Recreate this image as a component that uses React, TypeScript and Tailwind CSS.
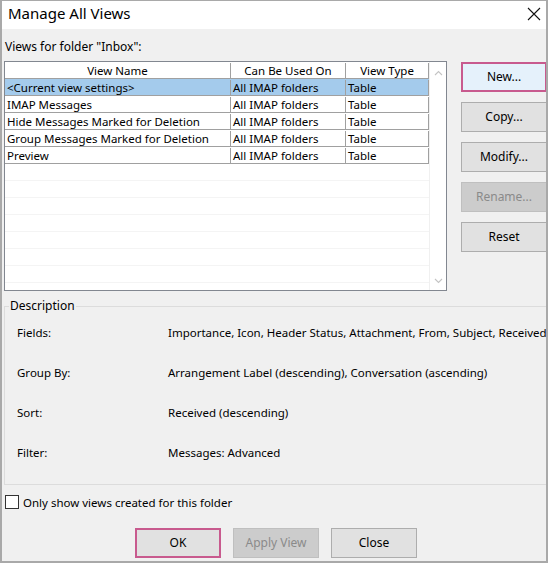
import React from "react";

const rows = [
  { name: "<Current view settings>", used: "All IMAP folders", type: "Table", sel: true },
  { name: "IMAP Messages", used: "All IMAP folders", type: "Table" },
  { name: "Hide Messages Marked for Deletion", used: "All IMAP folders", type: "Table" },
  { name: "Group Messages Marked for Deletion", used: "All IMAP folders", type: "Table" },
  { name: "Preview", used: "All IMAP folders", type: "Table" },
];

const desc = [
  { k: "Fields:", v: "Importance, Icon, Header Status, Attachment, From, Subject, Received, Size, Categories, Flag Status" },
  { k: "Group By:", v: "Arrangement Label (descending), Conversation (ascending)" },
  { k: "Sort:", v: "Received (descending)" },
  { k: "Filter:", v: "Messages: Advanced" },
];

function Btn({ label, variant = "normal" }: { label: string; variant?: "normal" | "focus" | "focusblue" | "disabled" }) {
  const cls =
    variant === "focusblue"
      ? "border-2 border-[#c85a8e] bg-[#e5f1fb] text-black"
      : variant === "focus"
      ? "border-2 border-[#c85a8e] bg-[#e1e1e1] text-black"
      : variant === "disabled"
      ? "border border-[#bfbfbf] bg-[#cccccc] text-[#8a8a8a]"
      : "border border-[#adadad] bg-[#e1e1e1] text-black";
  return (
    <div className={`w-[86px] h-[30px] shrink-0 flex items-center justify-center text-[12px] ${cls}`}>{label}</div>
  );
}

export default function App() {
  return (
    <div
      className="w-[550px] h-[566px] bg-white overflow-hidden"
      style={{ fontFamily: '"Noto Sans", "Liberation Sans", sans-serif' }}
    >
      <div className="w-[548px] h-[563px] border-x-2 border-b-2 border-t border-[#a9a9a9] flex flex-col overflow-hidden">
        {/* title bar */}
        <div className="h-[28px] shrink-0 bg-white flex items-center justify-between pl-[6px] pr-[4px] pb-[3px]">
          <span className="text-[15px] text-black leading-none">Manage All Views</span>
          <svg width="14" height="14" viewBox="0 0 14 14" className="mr-[1px]">
            <path d="M1 1 L13 13 M13 1 L1 13" stroke="#111" strokeWidth="1.1" />
          </svg>
        </div>
        {/* body */}
        <div className="flex-1 bg-[#f0f0f0] flex flex-col text-[11.5px] text-black">
          <div className="h-[31px] flex items-center pl-[3px] pt-[4px] text-[12px]">Views for folder "Inbox":</div>
          <div className="flex mt-[1px]">
            {/* list */}
            <div className="ml-[2px] w-[443px] h-[230px] border border-[#828790] bg-white flex">
              <div className="w-[424px] flex flex-col">
                <div className="h-[17px] flex border-b border-[#a0a0a0] bg-white pt-[1px]">
                  <div className="w-[226px] border-r border-[#a0a0a0] flex items-center justify-center">View Name</div>
                  <div className="w-[115px] border-r border-[#a0a0a0] flex items-center justify-center">Can Be Used On</div>
                  <div className="w-[83px] border-r border-[#a0a0a0] flex items-center justify-center">View Type</div>
                </div>
                {rows.map((r) => (
                  <div key={r.name} className={`h-[17px] flex border-b border-[#a0a0a0] pt-[1px] ${r.sel ? "bg-[#a4cbec]" : "bg-white"}`}>
                    <div className="w-[226px] border-r border-[#a0a0a0] flex items-center pl-[2px] whitespace-nowrap">{r.name}</div>
                    <div className="w-[115px] border-r border-[#a0a0a0] flex items-center pl-[2px] whitespace-nowrap">{r.used}</div>
                    <div className="w-[83px] border-r border-[#a0a0a0] flex items-center pl-[2px]">{r.type}</div>
                  </div>
                ))}
                {Array.from({ length: 7 }).map((_, i) => (
                  <div key={i} className="h-[17px] shrink-0 border-b border-[#f4f4f4]" />
                ))}
              </div>
              <div className="w-[17px] ml-auto flex flex-col items-center justify-between pt-[8px] pb-[6px] border-l border-[#f0f0f0]">
                <svg width="9" height="6" viewBox="0 0 9 6">
                  <path d="M1 5 L4.5 1.5 L8 5" stroke="#c4c4c4" strokeWidth="1.1" fill="none" />
                </svg>
                <svg width="9" height="6" viewBox="0 0 9 6">
                  <path d="M1 1 L4.5 4.5 L8 1" stroke="#c4c4c4" strokeWidth="1.1" fill="none" />
                </svg>
              </div>
            </div>
            {/* buttons */}
            <div className="ml-[14px] mt-[1px] flex flex-col gap-[10px]">
              <Btn label="New..." variant="focusblue" />
              <Btn label="Copy..." />
              <Btn label="Modify..." />
              <Btn label="Rename..." variant="disabled" />
              <Btn label="Reset" />
            </div>
          </div>
          {/* description */}
          <fieldset className="mt-[6px] ml-[2px] mr-[-4px] h-[188px] border border-[#dcdcdc] overflow-hidden">
            <legend className="ml-[4px] px-[1px] text-[12px]">Description</legend>
            <div className="flex flex-col pt-[9px] pl-[12px]">
              {desc.map((d) => (
                <div key={d.k} className="h-[40px] flex items-start whitespace-nowrap">
                  <div className="w-[151px] shrink-0">{d.k}</div>
                  <div>{d.v}</div>
                </div>
              ))}
            </div>
          </fieldset>
          {/* checkbox */}
          <div className="mt-[9px] ml-[3px] flex items-center gap-[4px] h-[16px]">
            <div className="w-[14px] h-[14px] border border-[#333] bg-white" />
            <span className="pt-[2px]">Only show views created for this folder</span>
          </div>
          {/* bottom buttons */}
          <div className="mt-[18px] ml-[133px] flex gap-[12px]">
            <Btn label="OK" variant="focus" />
            <Btn label="Apply View" variant="disabled" />
            <Btn label="Close" />
          </div>
        </div>
      </div>
    </div>
  );
}
